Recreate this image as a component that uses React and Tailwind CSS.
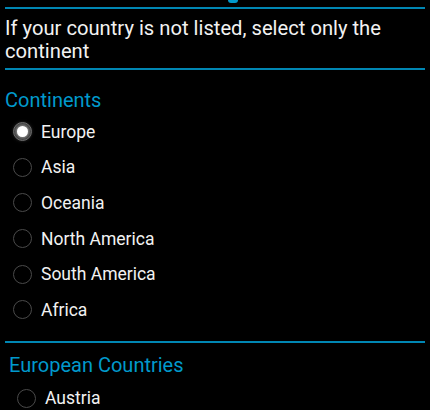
const CONTINENTS = ['Europe', 'Asia', 'Oceania', 'North America', 'South America', 'Africa'];

function Radio({ checked }) {
  if (checked) {
    return (
      <span className="flex h-[19px] w-[19px] items-center justify-center rounded-full border border-[#5a5a5a] bg-[#1a1a1a]">
        <span className="h-[11px] w-[11px] rounded-full bg-white shadow-[0_0_4px_2px_rgba(255,255,255,0.55)]" />
      </span>
    );
  }
  return <span className="block h-[19px] w-[19px] rounded-full border border-[#4a4a4a]" />;
}

function Divider() {
  return <div className="mx-[5px] h-[2px] bg-[#0086b3]" />;
}

export default function App() {
  return (
    <main className="h-[410px] w-[430px] overflow-hidden bg-black font-['Roboto',sans-serif] text-[#f2f2f2]">
      <div className="h-[3px] pl-[228px]">
        <div className="h-[3px] w-[10px] rounded-b-full bg-[#0099cc]" />
      </div>
      <div className="mt-[4px]">
        <Divider />
      </div>
      <p className="px-[5px] pt-[8px] pb-[5px] text-[20.2px] leading-[23px]">
        If your country is not listed, select only the continent
      </p>
      <Divider />

      <h2 className="mt-[19px] px-[5px] text-[20px] leading-[23px] text-[#0099cc]">Continents</h2>
      <ul className="mt-[2px]">
        {CONTINENTS.map((name, i) => (
          <li key={name} className="flex h-[35.6px] items-center gap-[9px] pl-[13px]">
            <Radio checked={i === 0} />
            <span className="text-[17.5px] leading-[20px]">{name}</span>
          </li>
        ))}
      </ul>

      <div className="mt-[13px]">
        <Divider />
      </div>
      <h2 className="mt-[11px] px-[9px] text-[20px] leading-[23px] text-[#0099cc]">European Countries</h2>
      <ul className="mt-[4px]">
        <li className="flex h-[35.6px] items-center gap-[9px] pl-[17px]">
          <Radio checked={false} />
          <span className="text-[17.5px] leading-[20px]">Austria</span>
        </li>
      </ul>
    </main>
  );
}
